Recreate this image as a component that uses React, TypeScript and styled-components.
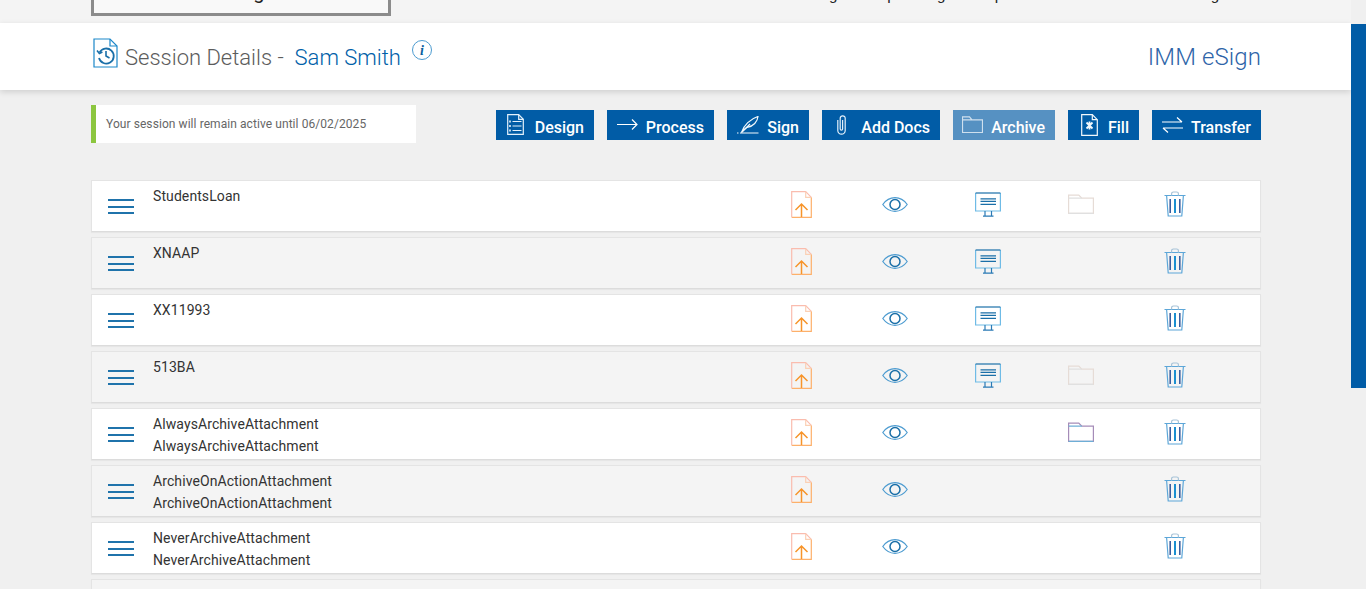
import React from "react"
import styled, { createGlobalStyle } from "styled-components"

const GlobalStyle = createGlobalStyle`
  html, body {
    margin: 0;
    padding: 0;
    height: 100%;
    overflow: hidden;
    background-color: #f0f0f0;
    font-family: "Roboto", "Liberation Sans", sans-serif;
  }
`

const Shell = styled.div`
  display: flex;
  height: 589px;
  overflow: hidden;
`

const Page = styled.div`
  flex: 1;
  min-width: 0;
  overflow: hidden;
`

const ScrollRail = styled.div`
  width: 15px;
  padding-top: 24px;
  background-color: #f0f0f0;
`

const ScrollThumb = styled.div`
  height: 364px;
  background-color: #015ca6;
`

const Container = styled.div`
  width: 1170px;
  margin-left: 91px;
`

const TopStrip = styled.div`
  height: 23px;
  overflow: hidden;
  background-color: #f4f4f4;
`

const TopInner = styled(Container)`
  display: flex;
  justify-content: space-between;
  align-items: flex-end;
  height: 16px;
`

const LogoBox = styled.div`
  flex: none;
  box-sizing: border-box;
  width: 300px;
  height: 16px;
  display: flex;
  justify-content: center;
  align-items: flex-end;
  padding: 0 26px 11px 0;
  border: solid #8c8c8c;
  border-width: 0 3px 3px;
  background-color: #f9f9f9;
  font-size: 20px;
  line-height: 20px;
  color: #222;
`

const TopNav = styled.div`
  display: flex;
  align-items: flex-end;
  height: 16px;
  padding: 0 34px 13px 0;
  box-sizing: border-box;
`

const TopLink = styled.span<{ $gap: number }>`
  margin-left: ${(p) => p.$gap}px;
  font-size: 15px;
  line-height: 15px;
  color: #222;
  white-space: nowrap;
`

const Header = styled.div`
  height: 67px;
  background-color: #fff;
  box-shadow: 0 2px 6px rgba(0, 0, 0, 0.14);
`

const HeaderInner = styled(Container)`
  display: flex;
  align-items: flex-start;
  height: 67px;
`

const TitleIcon = styled.span`
  display: flex;
  margin: 15px 0 0 2px;
`

const Title = styled.div`
  margin: 20px 0 0 6px;
  font-size: 22px;
  line-height: 30px;
  font-weight: 300;
  color: #5c5c5c;
  white-space: pre;
`

const ClientName = styled.span`
  color: #0060a8;
  font-weight: 300;
`

const InfoBadge = styled.span`
  display: flex;
  margin: 17px 0 0 11px;
`

const Brand = styled.div`
  margin: 19px 0 0 auto;
  font-size: 24px;
  line-height: 30px;
  font-weight: 300;
  letter-spacing: 0.1px;
  color: #2e64a8;
`

const ActionBar = styled(Container)`
  display: flex;
  align-items: flex-start;
  margin-top: 15px;
`

const Notice = styled.div`
  box-sizing: border-box;
  width: 325px;
  height: 38px;
  padding-left: 10px;
  display: flex;
  align-items: center;
  background-color: #fff;
  border-left: 5px solid #8cc63f;
  font-size: 12px;
  letter-spacing: 0.07px;
  color: #666;
`

const Buttons = styled.div`
  display: flex;
  gap: 13px;
  margin: 5px 0 0 auto;
`

const ActionButton = styled.div<{ $width: number; $inset: number; $faded?: boolean }>`
  box-sizing: border-box;
  width: ${(p) => p.$width}px;
  height: 30px;
  display: flex;
  align-items: center;
  justify-content: space-between;
  padding: 0 10px 0 ${(p) => p.$inset}px;
  background-color: ${(p) => (p.$faded ? "#5691c2" : "#015ca6")};
  color: #fff;
  font-size: 16px;
  font-weight: 500;
  white-space: nowrap;
`

const ButtonGlyph = styled.span`
  display: flex;
  margin-top: -1px;
`

const ButtonLabel = styled.span`
  padding-top: 4px;
`

const Rows = styled(Container)`
  display: flex;
  flex-direction: column;
  gap: 5px;
  margin-top: 37px;
`

const Row = styled.div<{ $alt: boolean }>`
  flex: none;
  box-sizing: border-box;
  height: 52px;
  display: grid;
  grid-template-columns: 61px 1fr repeat(5, 93.33px) 38.6px;
  border: 1px solid #e4e4e4;
  border-bottom-color: #dcdcdc;
  box-shadow: 0 1px 1px rgba(0, 0, 0, 0.04);
  background-color: ${(p) => (p.$alt ? "#f4f4f4" : "#fff")};
`

const Burger = styled.div`
  display: flex;
  flex-direction: column;
  gap: 4.5px;
  width: 26px;
  margin: 18px 0 0 16px;
`

const BurgerLine = styled.span`
  height: 2px;
  background-color: #1f73ab;
`

const Names = styled.div`
  padding-top: 4px;
  font-size: 14px;
  line-height: 22px;
  letter-spacing: 0.09px;
  color: #333;
`

const Cell = styled.div`
  display: flex;
  align-items: center;
  justify-content: center;
  padding-bottom: 4px;
`

const Line = styled.svg`
  display: block;
  fill: none;
  stroke-width: 1.2;
`

const SessionIcon = () => (
  <Line width="26" height="30" viewBox="0 0 26 30" stroke="#1b87c9">
    <path d="M1 1h16l7 7v21H1z" />
    <path d="M17 1v7h7" />
    <path d="M6.6 14.5A7.5 7.5 0 1 1 6 20" strokeWidth="1.8" stroke="#1a6fa8" />
    <path d="M4 12.5l2.4 3 3-1.5M13 13v5l3.5 2" strokeWidth="1.6" stroke="#1a6fa8" />
  </Line>
)

const InfoIcon = () => (
  <svg width="20" height="20" viewBox="0 0 20 20">
    <circle cx="10" cy="10" r="9.5" fill="none" stroke="#4c9bd0" strokeWidth="1" />
    <text x="10" y="14.5" textAnchor="middle" fontFamily="Liberation Serif, serif" fontStyle="italic" fontWeight="700" fontSize="14" fill="#0a5f9e">
      i
    </text>
  </svg>
)

const DesignGlyph = () => (
  <Line width="17" height="21" viewBox="0 0 17 21" stroke="#e4f1fb">
    <path d="M.7.7h11l4.6 4.6v15H.7z" />
    <path d="M11.7.7v4.6h4.6M5.5 7.5h9M5.5 12h9M5.5 16.5h9" />
    <path d="M2.2 7.5h1.6M2.2 12h1.6M2.2 16.5h1.6" strokeWidth="2" />
  </Line>
)

const ProcessGlyph = () => (
  <Line width="21" height="11" viewBox="0 0 21 11" stroke="#fff">
    <path d="M0 5.5h20M15 .5l5 5-5 5" />
  </Line>
)

const SignGlyph = () => (
  <Line width="22" height="18" viewBox="0 0 22 18" stroke="#f2f8fc">
    <path d="M0 17h1.5M3 17h18.5" />
    <path d="M5 15.5C7 9.5 13 3 21 .5c-.5 5-4.5 10-11 10.8z" />
    <path d="M4.5 16.5 13 8" />
  </Line>
)

const ClipGlyph = () => (
  <Line width="9" height="20" viewBox="0 0 9 20" stroke="#e4f1fb">
    <path d="M.8 5v10.5a3.7 3.7 0 0 0 7.4 0V3.3a2.5 2.5 0 0 0-5 0V14a1.2 1.2 0 0 0 2.4 0V5" />
  </Line>
)

const ArchiveGlyph = () => (
  <Line width="21" height="17" viewBox="0 0 21 17" stroke="#cfe0ee">
    <path d="M.5 16.5V.8h7l2.5 3h10.5v12.7zM.5 3.8H10" />
  </Line>
)

const FillGlyph = () => (
  <Line width="17" height="22" viewBox="0 0 17 22" stroke="#f2f8fc">
    <path d="M.7.7h10.6l5 5v15.6H.7z" />
    <path d="M11.3.7v5h5" />
    <path d="M5.5 8.5l6 6M11.5 8.5l-6 6M8.5 7.5v8" strokeWidth="1.8" />
  </Line>
)

const TransferGlyph = () => (
  <Line width="21" height="16" viewBox="0 0 21 16" stroke="#fff">
    <path d="M0 5h20M15 .5l5 4.5M21 11H1M6 15.5l-5-4.5" />
  </Line>
)

const UploadIcon = () => (
  <Line width="21" height="27" viewBox="0 0 21 27">
    <path d="M20.3 6.3v20H.7" stroke="#fdb06a" />
    <path d="M.7 26.3V.7h14l5.6 5.6" stroke="#fabcae" />
    <path d="M14.7.7v5.6h5.6" stroke="#fbd0b4" />
    <path d="M10.5 26V13M4.5 19l6-6 6 6" stroke="#f7942a" strokeWidth="1.5" />
  </Line>
)

const EyeIcon = () => (
  <Line width="26" height="15" viewBox="0 0 26 15" stroke="#4c9bd0">
    <path d="M.8 7.5C4 3 8 .7 13 .7s9 2.3 12.2 6.8C22 12 18 14.3 13 14.3S4 12 .8 7.5z" />
    <circle cx="13" cy="7.5" r="5" strokeWidth="1.5" stroke="#1a6fa8" />
  </Line>
)

const MonitorIcon = () => (
  <Line width="26" height="25" viewBox="0 0 26 25" stroke="#6fbbe6">
    <path d="M.6 1v18h24.8V1" />
    <path d="M.6 1h24.8" stroke="#1a6fa8" />
    <path d="M5.5 6.8h15.5M5.5 9.4h15.5M5.5 12.4h15.5" stroke="#1a6fa8" strokeWidth="1.3" />
    <path d="M10 19v5M16.5 19v5M8 24.2h10.5" stroke="#2a7ab5" />
  </Line>
)

const FolderIcon = ({ line, edge }: { line: string; edge: string }) => (
  <Line width="26" height="20" viewBox="0 0 26 20" stroke={line}>
    <path d="M.6 19.4V1.2h10.2l3 3h11.6v15.2z" />
    <path d="M.6 4.2h13.2M.6 19.4h24.8" stroke={edge} />
  </Line>
)

const TrashIcon = () => (
  <Line width="22" height="26" viewBox="0 0 22 26" stroke="#5ca6d8">
    <path d="M.5 4.5h21M2.6 4.5l1.6 20.5h13.6l1.6-20.5" />
    <path d="M7.6 4.5V2.6C7.6 1.6 8.4 1 9.4 1h3.2c1 0 1.8.6 1.8 1.6v1.9" stroke="#a8c4d8" />
    <path d="M6.2 8v14" strokeWidth="1.6" stroke="#3c5f9e" />
    <path d="M11 8v14" strokeWidth="2" stroke="#1b8fd0" />
    <path d="M15.8 8v14" strokeWidth="1.6" stroke="#3c5f9e" />
  </Line>
)

type Attachment = {
  lines: string[]
  monitor: boolean
  folder?: "faded" | "solid"
}

const attachments: Attachment[] = [
  { lines: ["StudentsLoan"], monitor: true, folder: "faded" },
  { lines: ["XNAAP"], monitor: true },
  { lines: ["XX11993"], monitor: true },
  { lines: ["513BA"], monitor: true, folder: "faded" },
  { lines: ["AlwaysArchiveAttachment", "AlwaysArchiveAttachment"], monitor: false, folder: "solid" },
  { lines: ["ArchiveOnActionAttachment", "ArchiveOnActionAttachment"], monitor: false },
  { lines: ["NeverArchiveAttachment", "NeverArchiveAttachment"], monitor: false },
  { lines: [], monitor: false },
]

const actions = [
  { label: "Design", width: 98, inset: 11, glyph: <DesignGlyph /> },
  { label: "Process", width: 107, inset: 10, glyph: <ProcessGlyph /> },
  { label: "Sign", width: 82, inset: 10, glyph: <SignGlyph /> },
  { label: "Add Docs", width: 118, inset: 15, glyph: <ClipGlyph /> },
  { label: "Archive", width: 102, inset: 9, glyph: <ArchiveGlyph />, faded: true },
  { label: "Fill", width: 71, inset: 13, glyph: <FillGlyph /> },
  { label: "Transfer", width: 109, inset: 10, glyph: <TransferGlyph /> },
]

const App: React.FC = () => {
  return (
    <Shell>
      <GlobalStyle />
      <Page>
        <TopStrip>
          <TopInner>
            <LogoBox>IMM eSign</LogoBox>
            <TopNav>
              <TopLink $gap={0}>Manage</TopLink>
              <TopLink $gap={32}>Upcoming</TopLink>
              <TopLink $gap={27}>Help</TopLink>
              <TopLink $gap={169}>Settings</TopLink>
            </TopNav>
          </TopInner>
        </TopStrip>
        <Header>
          <HeaderInner>
            <TitleIcon>
              <SessionIcon />
            </TitleIcon>
            <Title>
              Session Details -  <ClientName>Sam Smith</ClientName>
            </Title>
            <InfoBadge>
              <InfoIcon />
            </InfoBadge>
            <Brand>IMM eSign</Brand>
          </HeaderInner>
        </Header>
        <ActionBar>
          <Notice>Your session will remain active until 06/02/2025</Notice>
          <Buttons>
            {actions.map((action) => (
              <ActionButton key={action.label} $width={action.width} $inset={action.inset} $faded={action.faded}>
                <ButtonGlyph>{action.glyph}</ButtonGlyph>
                <ButtonLabel>{action.label}</ButtonLabel>
              </ActionButton>
            ))}
          </Buttons>
        </ActionBar>
        <Rows>
          {attachments.map((item, i) => (
            <Row key={i} $alt={i % 2 === 1}>
              <Burger>
                <BurgerLine />
                <BurgerLine />
                <BurgerLine />
              </Burger>
              <Names>
                {item.lines.map((line, j) => (
                  <div key={j}>{line}</div>
                ))}
              </Names>
              <Cell><UploadIcon /></Cell>
              <Cell><EyeIcon /></Cell>
              <Cell>{item.monitor && <MonitorIcon />}</Cell>
              <Cell>
                {item.folder === "solid" && <FolderIcon line="#a58cb8" edge="#6eaed6" />}
                {item.folder === "faded" && <FolderIcon line="#e6dcd6" edge="#e0e0e0" />}
              </Cell>
              <Cell><TrashIcon /></Cell>
            </Row>
          ))}
        </Rows>
      </Page>
      <ScrollRail>
        <ScrollThumb />
      </ScrollRail>
    </Shell>
  )
}

export default App
